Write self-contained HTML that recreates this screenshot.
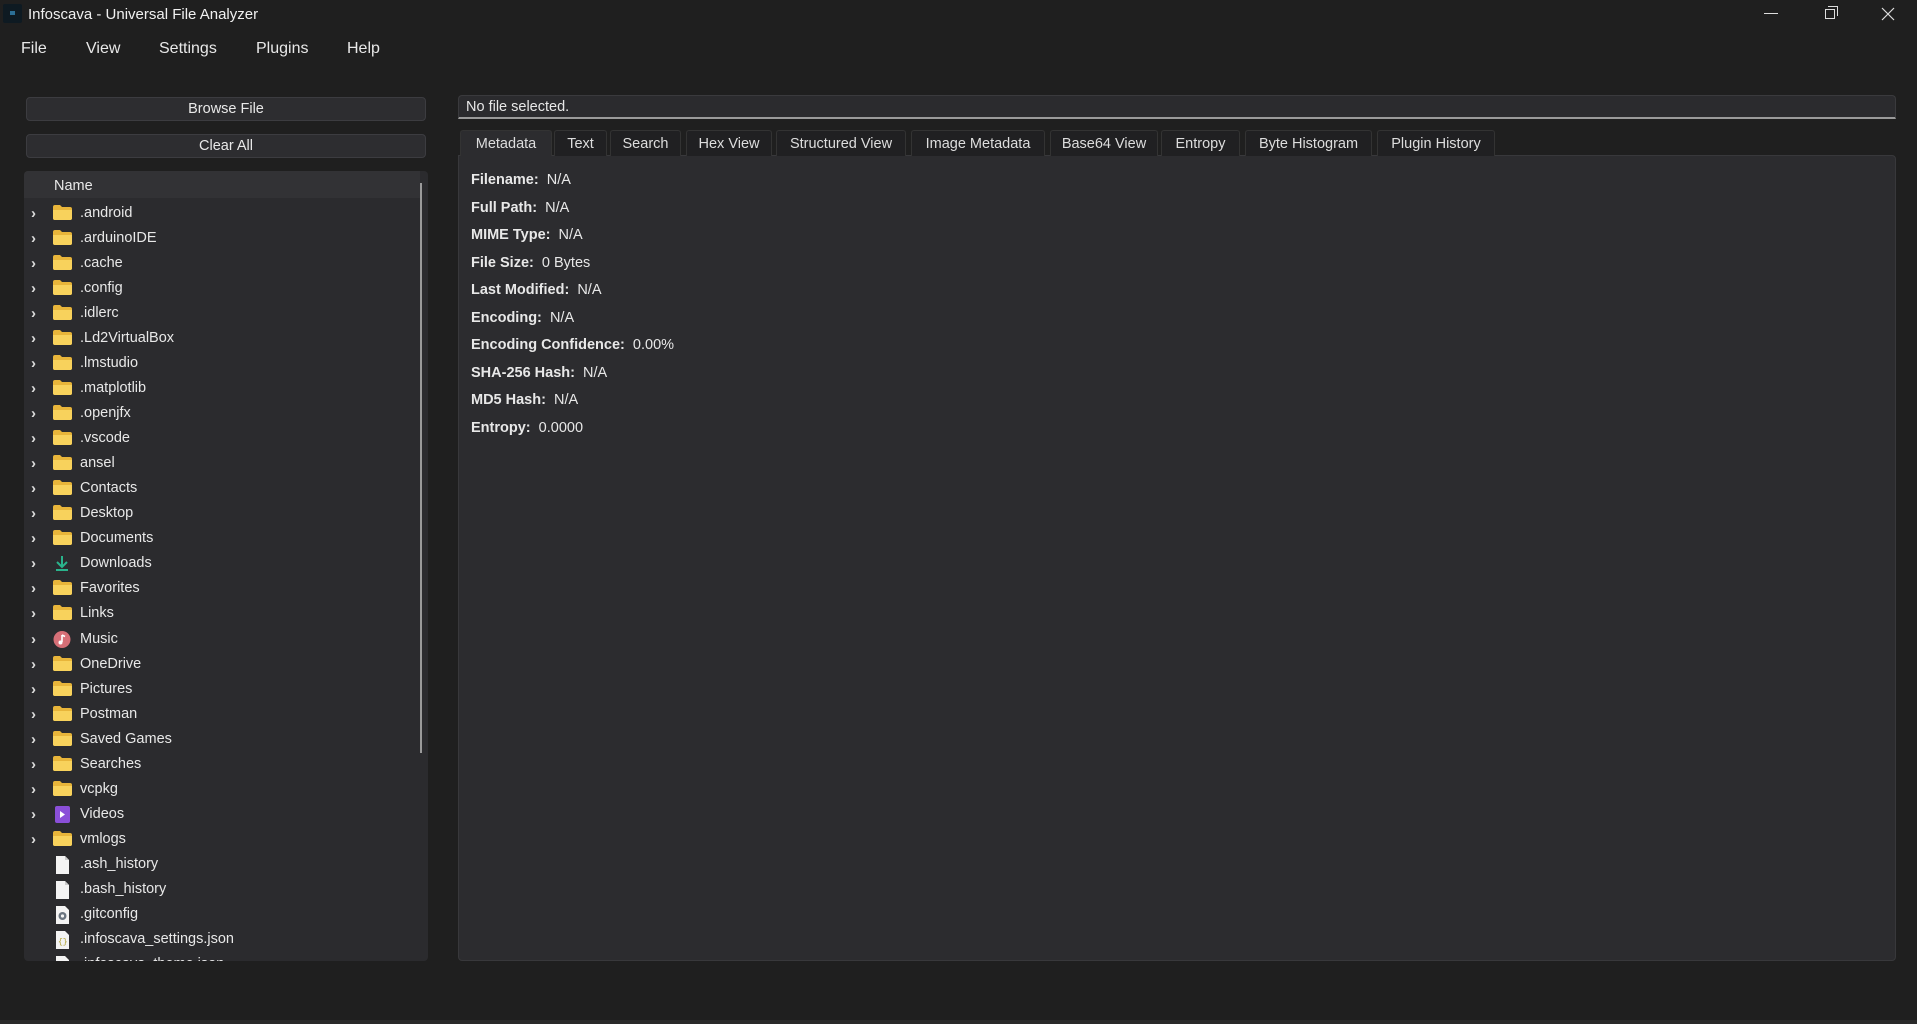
<!DOCTYPE html>
<html><head><meta charset="utf-8"><style>
*{margin:0;padding:0;box-sizing:border-box}
body{width:1917px;height:1024px;background:#1f1f1f;font-family:"Liberation Sans",sans-serif;color:#e8e8e8;position:relative;overflow:hidden;font-size:14.5px}
.a{position:absolute;white-space:nowrap}
.btn{position:absolute;left:26px;width:400px;height:24px;background:#2d2d30;border:1px solid #3c3c40;border-radius:4px;text-align:center;line-height:23px;font-size:14.5px}
.tree{position:absolute;left:24px;top:171px;width:404px;height:790px;background:#2b2b2e;border-radius:4px;overflow:hidden}
.row{position:absolute;left:0;width:390px;height:25px;line-height:27px;font-size:14.5px;white-space:nowrap}
.row .ar{position:absolute;left:7px;top:0;font-size:15px;color:#ddd;font-weight:bold}
.row svg{position:absolute;left:29px;top:5px}
.row .t{position:absolute;left:56px}
.tab{position:absolute;top:130px;height:26px;background:#202022;border:1px solid #333;border-bottom:none;border-radius:3px 3px 0 0;text-align:center;line-height:26px;font-size:14.5px;color:#ddd;white-space:nowrap}
.m{position:absolute;left:471px;font-size:14.5px;white-space:nowrap}
.m b{font-weight:bold}
</style></head><body>
<div class="a" style="left:0;top:0;width:1917px;height:29px;background:#1f1f1f"></div>
<div class="a" style="left:3px;top:4px;width:19px;height:19px;background:#0e1a22;border-radius:2px"><div style="position:absolute;left:7px;top:7px;width:5px;height:4px;background:#2c6f96"></div></div>
<div class="a" style="left:28px;top:6px;font-size:15px;color:#f0f0f0">Infoscava - Universal File Analyzer</div>
<div class="a" style="left:1764px;top:13px;width:14px;height:1px;background:#ddd"></div>
<div class="a" style="left:1825px;top:9px;width:10px;height:10px;border:1px solid #ddd"></div>
<div class="a" style="left:1828px;top:6px;width:10px;height:10px;border-top:1px solid #ddd;border-right:1px solid #ddd"></div>
<svg class="a" style="left:1881px;top:7px" width="14" height="14"><path d="M1 1L13 13M13 1L1 13" stroke="#ddd" stroke-width="1.2"/></svg>
<div class="a" style="left:21px;top:40px;font-size:16px">File</div>
<div class="a" style="left:86px;top:40px;font-size:16px">View</div>
<div class="a" style="left:159px;top:40px;font-size:16px">Settings</div>
<div class="a" style="left:256px;top:40px;font-size:16px">Plugins</div>
<div class="a" style="left:347px;top:40px;font-size:16px">Help</div>
<div class="btn" style="top:97px">Browse File</div>
<div class="btn" style="top:134px">Clear All</div>
<div class="tree">
<div class="a" style="left:0;top:0;width:396px;height:27px;background:#323235"></div>
<div class="a" style="left:30px;top:7px;font-size:14.5px">Name</div>
<div class="a" style="left:396px;top:12px;width:2px;height:570px;background:#9a9a9a"></div>
<div id="rows"></div>
</div>
<div class="a" style="left:458px;top:95px;width:1438px;height:24px;background:#2b2b2e;border:1px solid #3a3a3d;border-radius:4px 4px 0 0;border-bottom:2px solid #9a9a9a;padding-left:7px;line-height:22px;font-size:14.5px">No file selected.</div>
<div class="a" style="left:458px;top:155px;width:1438px;height:806px;background:#2c2c2f;border:1px solid #38383b;border-radius:0 4px 4px 4px"></div>
<div class="tab" style="left:460px;width:92px;background:#2c2c2f">Metadata</div>
<div class="tab" style="left:554px;width:53px">Text</div>
<div class="tab" style="left:610px;width:71px">Search</div>
<div class="tab" style="left:686px;width:86px">Hex View</div>
<div class="tab" style="left:776px;width:130px">Structured View</div>
<div class="tab" style="left:911px;width:134px">Image Metadata</div>
<div class="tab" style="left:1050px;width:108px">Base64 View</div>
<div class="tab" style="left:1161px;width:79px">Entropy</div>
<div class="tab" style="left:1245px;width:127px">Byte Histogram</div>
<div class="tab" style="left:1377px;width:118px">Plugin History</div>
<div class="m" style="top:172px"><b>Filename:</b>&nbsp; N/A</div>
<div class="m" style="top:200px"><b>Full Path:</b>&nbsp; N/A</div>
<div class="m" style="top:227px"><b>MIME Type:</b>&nbsp; N/A</div>
<div class="m" style="top:255px"><b>File Size:</b>&nbsp; 0 Bytes</div>
<div class="m" style="top:282px"><b>Last Modified:</b>&nbsp; N/A</div>
<div class="m" style="top:310px"><b>Encoding:</b>&nbsp; N/A</div>
<div class="m" style="top:337px"><b>Encoding Confidence:</b>&nbsp; 0.00%</div>
<div class="m" style="top:365px"><b>SHA-256 Hash:</b>&nbsp; N/A</div>
<div class="m" style="top:392px"><b>MD5 Hash:</b>&nbsp; N/A</div>
<div class="m" style="top:420px"><b>Entropy:</b>&nbsp; 0.0000</div>
<div class="a" style="left:0;top:1020px;width:1917px;height:4px;background:#2a2a2a"></div>
<script>
var F='<svg width="19" height="15"><path d="M0 2Q0 0 2 0H7L9 2H17Q19 2 19 4V13Q19 15 17 15H2Q0 15 0 13Z" fill="#e8b53a"/><path d="M0 5H19V13Q19 15 17 15H2Q0 15 0 13Z" fill="#f8d25c"/></svg>';
var D='<svg width="19" height="16"><path d="M9 1V12M4 7L9 12L14 7M3 15H15" stroke="#2ab38c" stroke-width="2" fill="none"/></svg>';
var Mu='<svg width="19" height="17"><circle cx="9" cy="8.5" r="8.5" fill="#d66f77"/><path d="M9 4V11" stroke="#fff" stroke-width="1.6"/><circle cx="7.5" cy="11.5" r="2" fill="#fff"/><path d="M9 4L12 5.5" stroke="#fff" stroke-width="1.6"/></svg>';
var V='<svg width="19" height="17"><rect x="2" y="0" width="15" height="17" rx="2" fill="#8a4fd8"/><path d="M7 5L12 8.5L7 12Z" fill="#fff"/></svg>';
var Fi='<svg width="19" height="18"><path d="M3 0H12L16 4V18H3Z" fill="#f4f4f4"/><path d="M12 0V4H16" fill="#ccc"/></svg>';
var G='<svg width="19" height="18"><path d="M3 0H12L16 4V18H3Z" fill="#f4f4f4"/><circle cx="9.5" cy="10" r="4" fill="#6b7580"/><circle cx="9.5" cy="10" r="1.6" fill="#f4f4f4"/></svg>';
var J='<svg width="19" height="18"><path d="M3 0H12L16 4V18H3Z" fill="#f4f4f4"/><text x="5" y="13" font-size="8" fill="#b0a030" font-family="Liberation Mono">{}</text></svg>';
var items=[[1,F,'.android'],[1,F,'.arduinoIDE'],[1,F,'.cache'],[1,F,'.config'],[1,F,'.idlerc'],[1,F,'.Ld2VirtualBox'],[1,F,'.lmstudio'],[1,F,'.matplotlib'],[1,F,'.openjfx'],[1,F,'.vscode'],[1,F,'ansel'],[1,F,'Contacts'],[1,F,'Desktop'],[1,F,'Documents'],[1,D,'Downloads'],[1,F,'Favorites'],[1,F,'Links'],[1,Mu,'Music'],[1,F,'OneDrive'],[1,F,'Pictures'],[1,F,'Postman'],[1,F,'Saved Games'],[1,F,'Searches'],[1,F,'vcpkg'],[1,V,'Videos'],[1,F,'vmlogs'],[0,Fi,'.ash_history'],[0,Fi,'.bash_history'],[0,G,'.gitconfig'],[0,J,'.infoscava_settings.json'],[0,J,'.infoscava_theme.json']];
var h='';items.forEach(function(it,i){h+='<div class="row" style="top:'+(29+i*25.03)+'px">'+(it[0]?'<span class="ar">&#x203A;</span>':'')+it[1]+'<span class="t">'+it[2]+'</span></div>';});
document.getElementById('rows').innerHTML=h;
</script>
</body></html>
